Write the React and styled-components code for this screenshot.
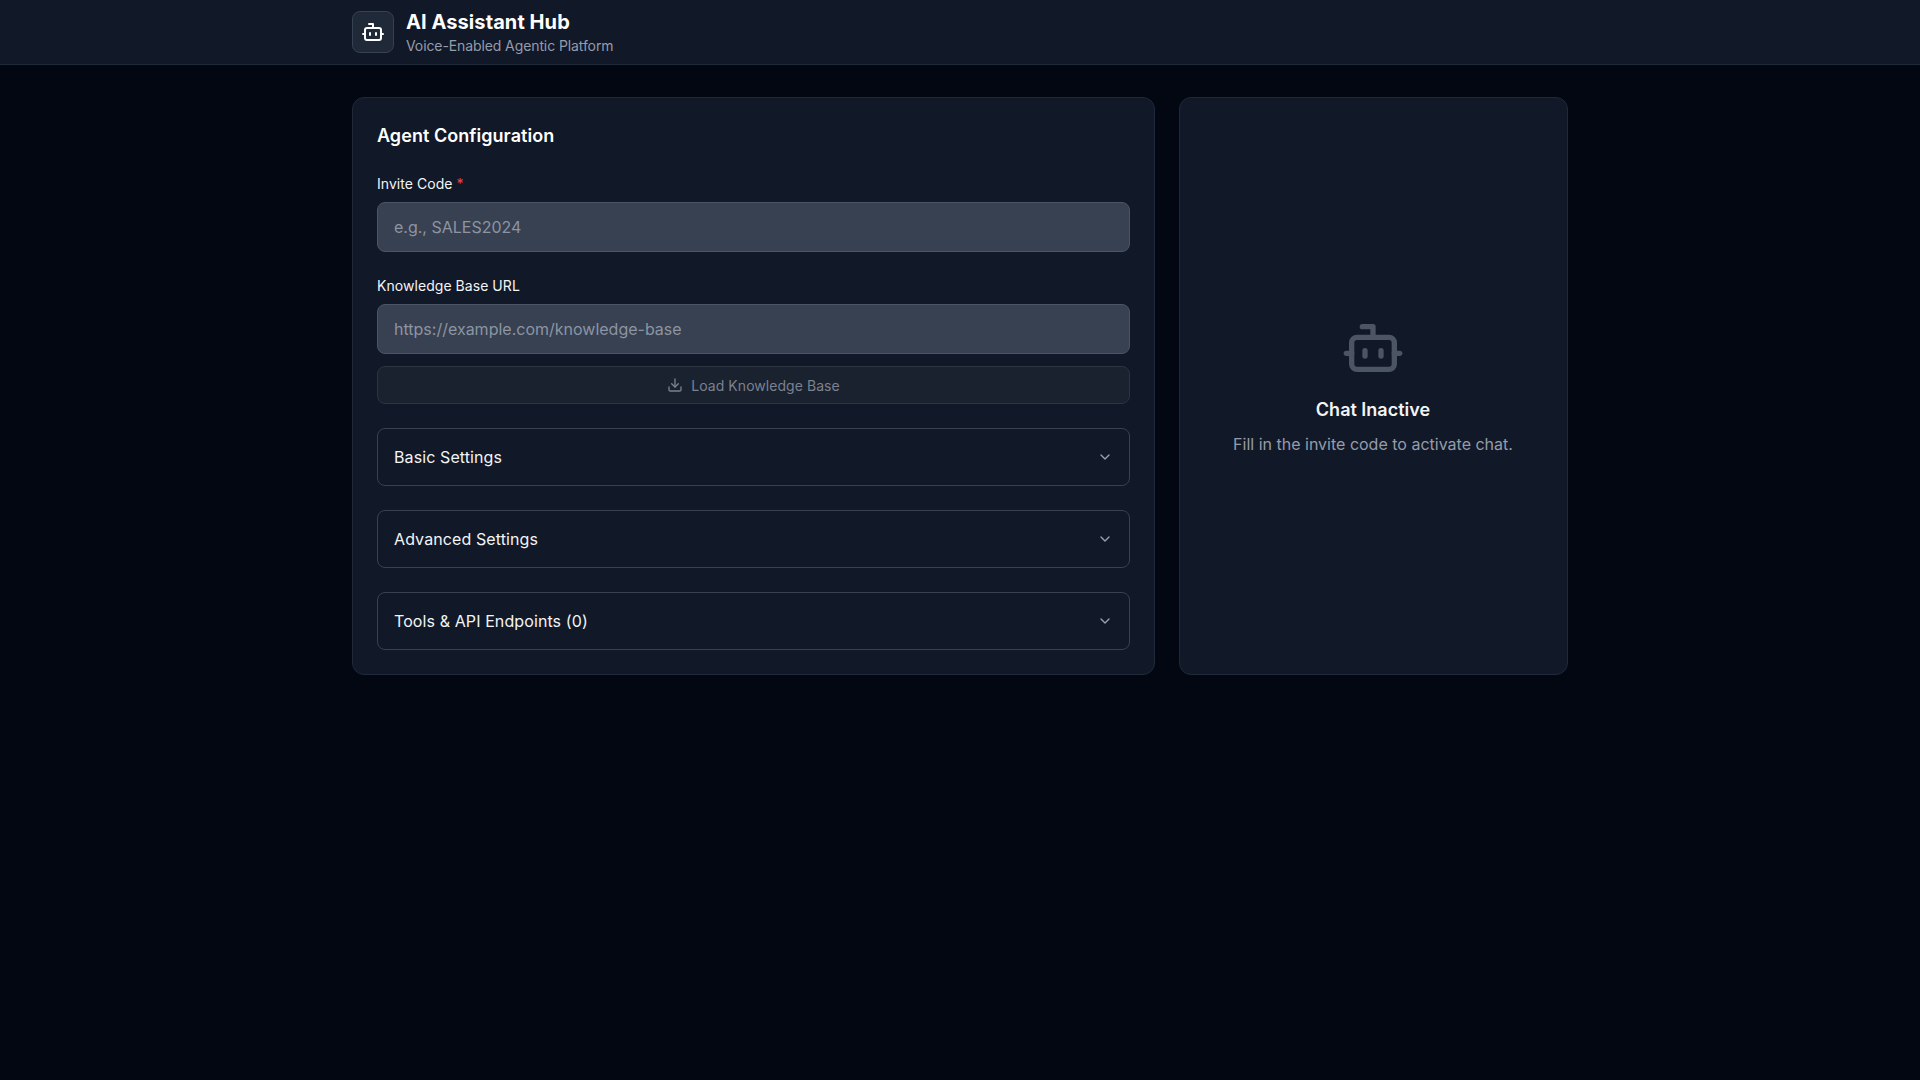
import React from 'react';
import styled, { createGlobalStyle } from 'styled-components';
import { Bot, ChevronDown, Download } from 'lucide-react';

const GlobalStyle = createGlobalStyle`
    * {
        box-sizing: border-box;
    }
    body {
        margin: 0;
        background-color: #030712;
        font-family: Inter, "Liberation Sans", sans-serif;
        color: #f3f4f6;
    }
`;

const sections = ['Basic Settings', 'Advanced Settings', 'Tools & API Endpoints (0)'];

const App = () => {
    return (
        <PageContainer>
            <GlobalStyle />
            <Header>
                <HeaderInner>
                    <LogoBox>
                        <Bot size={24} color='#ffffff' />
                    </LogoBox>
                    <div>
                        <AppTitle>AI Assistant Hub</AppTitle>
                        <AppSubtitle>Voice-Enabled Agentic Platform</AppSubtitle>
                    </div>
                </HeaderInner>
            </Header>

            <Main>
                <ConfigCard>
                    <CardTitle>Agent Configuration</CardTitle>

                    <Field>
                        <Label>
                            Invite Code <Required>*</Required>
                        </Label>
                        <Input placeholder='e.g., SALES2024' />
                    </Field>

                    <Field>
                        <Label>Knowledge Base URL</Label>
                        <Input placeholder='https://example.com/knowledge-base' />
                        <LoadButton disabled>
                            <Download size={16} />
                            Load Knowledge Base
                        </LoadButton>
                    </Field>

                    {sections.map((name) => (
                        <Accordion key={name}>
                            {name}
                            <ChevronDown size={16} color='#9ca3af' />
                        </Accordion>
                    ))}
                </ConfigCard>

                <ChatCard>
                    <Bot size={64} color='#4b5563' />
                    <ChatTitle>Chat Inactive</ChatTitle>
                    <ChatText>Fill in the invite code to activate chat.</ChatText>
                </ChatCard>
            </Main>
        </PageContainer>
    );
};

export default App;

const PageContainer = styled.div`
    min-height: 100vh;
    background-color: #030712;
`;

const Header = styled.header`
    height: 65px;
    background-color: #111827;
    border-bottom: 1px solid #1f2937;
`;

const HeaderInner = styled.div`
    width: 1216px;
    height: 64px;
    margin: 0 auto;
    display: flex;
    align-items: center;
    gap: 12px;
`;

const LogoBox = styled.div`
    width: 42px;
    height: 42px;
    display: flex;
    align-items: center;
    justify-content: center;
    background-color: #1f2937;
    border: 1px solid #374151;
    border-radius: 8px;
`;

const AppTitle = styled.h1`
    margin: 0;
    font-size: 20px;
    line-height: 28px;
    font-weight: 700;
    letter-spacing: 0.08px;
    color: #ffffff;
`;

const AppSubtitle = styled.p`
    margin: 0;
    font-size: 14px;
    line-height: 20px;
    letter-spacing: -0.1px;
    color: #959cab;
`;

const Main = styled.main`
    width: 1216px;
    margin: 0 auto;
    padding-top: 32px;
    display: grid;
    grid-template-columns: minmax(0, 1fr) 389px;
    gap: 24px;
`;

const ConfigCard = styled.section`
    padding: 24px;
    background-color: #111827;
    border: 1px solid #1f2937;
    border-radius: 12px;
    display: flex;
    flex-direction: column;
    gap: 24px;
`;

const CardTitle = styled.h2`
    margin: 0;
    font-size: 18px;
    line-height: 28px;
    font-weight: 600;
    letter-spacing: 0.05px;
    color: #ffffff;
`;

const Field = styled.div`
    display: flex;
    flex-direction: column;
`;

const Label = styled.label`
    margin-bottom: 8px;
    font-size: 14px;
    line-height: 20px;
    font-weight: 400;
    letter-spacing: 0.05px;
    color: #f3f4f6;
`;

const Required = styled.span`
    color: #ef4444;
`;

const Input = styled.input`
    height: 50px;
    padding: 0 16px;
    font-family: inherit;
    font-size: 16px;
    color: #f3f4f6;
    background-color: #374151;
    border: 1px solid #4b5563;
    border-radius: 8px;

    &::placeholder {
        color: #8d94a2;
        opacity: 1;
    }
`;

const LoadButton = styled.button`
    height: 38px;
    margin-top: 12px;
    display: flex;
    align-items: center;
    justify-content: center;
    gap: 8px;
    font-family: inherit;
    font-size: 14px;
    font-weight: 400;
    letter-spacing: 0.05px;
    color: #7a818f;
    background-color: #1a2230;
    border: 1px solid #2b3441;
    border-radius: 8px;
`;

const Accordion = styled.div`
    height: 58px;
    padding: 0 16px;
    display: flex;
    align-items: center;
    justify-content: space-between;
    font-size: 16px;
    font-weight: 400;
    letter-spacing: 0.1px;
    color: #f3f4f6;
    border: 1px solid #374151;
    border-radius: 8px;
`;

const ChatCard = styled.aside`
    padding-right: 1px;
    display: flex;
    flex-direction: column;
    align-items: center;
    justify-content: center;
    background-color: #111827;
    border: 1px solid #1f2937;
    border-radius: 12px;
`;

const ChatTitle = styled.h3`
    margin: 16px 0 8px;
    font-size: 18px;
    line-height: 28px;
    font-weight: 600;
    color: #f3f4f6;
`;

const ChatText = styled.p`
    margin: 0;
    font-size: 16px;
    line-height: 24px;
    color: #959cab;
`;
